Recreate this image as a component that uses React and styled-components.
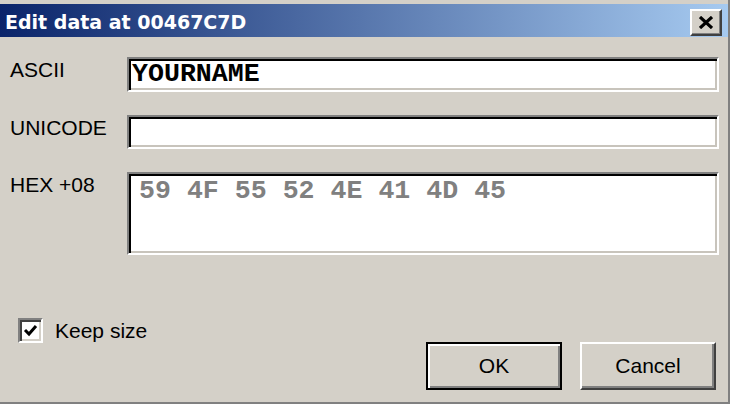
import React from 'react'
import styled, { createGlobalStyle } from 'styled-components'

const Global = createGlobalStyle`
  html, body {
    margin: 0;
    padding: 0;
    background: #d4d0c8;
  }
  * { box-sizing: border-box; }
`

const Window = styled.div`
  width: 730px;
  height: 404px;
  padding-top: 4px;
  background: #d4d0c8;
  border-right: 2px solid #808080;
  border-bottom: 2px solid #808080;
  display: flex;
  flex-direction: column;
  font-family: "Liberation Sans", Arial, sans-serif;
  font-size: 21px;
  color: #000;
  overflow: hidden;
`

const TitleBar = styled.div`
  height: 33px;
  display: flex;
  align-items: center;
  justify-content: space-between;
  padding: 0 6px 0 5px;
  background: linear-gradient(to right, #0a246a, #a6caf0);
`

const Title = styled.span`
  font-family: "DejaVu Sans", sans-serif;
  font-weight: bold;
  font-size: 19px;
  color: #fff;
  margin-top: 2px;
  white-space: nowrap;
`

const CloseButton = styled.button`
  width: 32px;
  height: 27px;
  margin-top: 4px;
  padding: 0;
  display: flex;
  align-items: center;
  justify-content: center;
  background: #d4d0c8;
  border: 2px solid;
  border-color: #fff #404040 #404040 #fff;
  box-shadow: inset -1px -1px #808080;
`

const Body = styled.div`
  flex: 1;
  display: flex;
  flex-direction: column;
  padding: 20px 9px 12px 10px;
`

const Form = styled.div`
  display: grid;
  grid-template-columns: 117px 1fr;
  row-gap: 23px;
`

const Label = styled.div`
  padding-top: 1px;
  line-height: 24px;
  white-space: nowrap;
`

const Field = styled.div`
  height: ${p => p.$h}px;
  background: #fff;
  border: 2px solid;
  border-color: #808080 #fff #fff #808080;
  box-shadow: inset 2px 2px #000, inset -2px -2px #c8c4bc;
  padding: ${p => p.$pad};
  font-family: "Liberation Mono", "Courier New", monospace;
  font-weight: bold;
  font-size: 26.6px;
  line-height: 28px;
  color: ${p => (p.$muted ? '#808080' : '#000')};
  white-space: pre;
`

const Footer = styled.div`
  margin-top: 63px;
  display: flex;
  align-items: flex-start;
`

const CheckLabel = styled.label`
  display: flex;
  align-items: center;
  gap: 12px;
  margin-left: 8px;
  line-height: 25px;
`

const CheckBox = styled.span`
  width: 25px;
  height: 25px;
  background: #fff;
  border: 2px solid;
  border-color: #808080 #fff #fff #808080;
  box-shadow: inset 2px 2px #404040, inset -2px -2px #d4d0c8;
  display: flex;
  align-items: center;
  justify-content: center;
`

const Buttons = styled.div`
  margin-left: auto;
  margin-top: 24px;
  margin-right: 3px;
  display: flex;
  gap: 18px;
`

const Button = styled.button`
  width: 136px;
  height: 48px;
  padding: 0;
  background: #d4d0c8;
  font-family: "Liberation Sans", Arial, sans-serif;
  font-size: 21px;
  color: #000;
  border: 2px solid;
  border-color: ${p => (p.$default ? '#000' : '#fff #404040 #404040 #fff')};
  box-shadow: ${p =>
    p.$default
      ? 'inset 2px 2px #fff, inset -2px -2px #808080'
      : 'inset -2px -2px #808080'};
`

export default function App() {
  return (
    <>
      <Global />
      <Window>
        <TitleBar>
          <Title>Edit data at 00467C7D</Title>
          <CloseButton aria-label="Close">
            <svg width="14" height="13" viewBox="0 0 14 13">
              <path d="M1 1 L13 12 M13 1 L1 12" stroke="#000" strokeWidth="3.2" />
            </svg>
          </CloseButton>
        </TitleBar>
        <Body>
          <Form>
            <Label>ASCII</Label>
            <Field $h={35} $pad="1px 3px">YOURNAME</Field>
            <Label>UNICODE</Label>
            <Field $h={34} $pad="1px 3px" />
            <Label>HEX +08</Label>
            <Field $h={83} $pad="3px 10px" $muted>59 4F 55 52 4E 41 4D 45</Field>
          </Form>
          <Footer>
            <CheckLabel>
              <CheckBox>
                <svg width="15" height="13" viewBox="0 0 15 13">
                  <path d="M2 6 L6 10 L13 2" stroke="#000" strokeWidth="3" fill="none" />
                </svg>
              </CheckBox>
              Keep size
            </CheckLabel>
            <Buttons>
              <Button $default>OK</Button>
              <Button>Cancel</Button>
            </Buttons>
          </Footer>
        </Body>
      </Window>
    </>
  )
}
